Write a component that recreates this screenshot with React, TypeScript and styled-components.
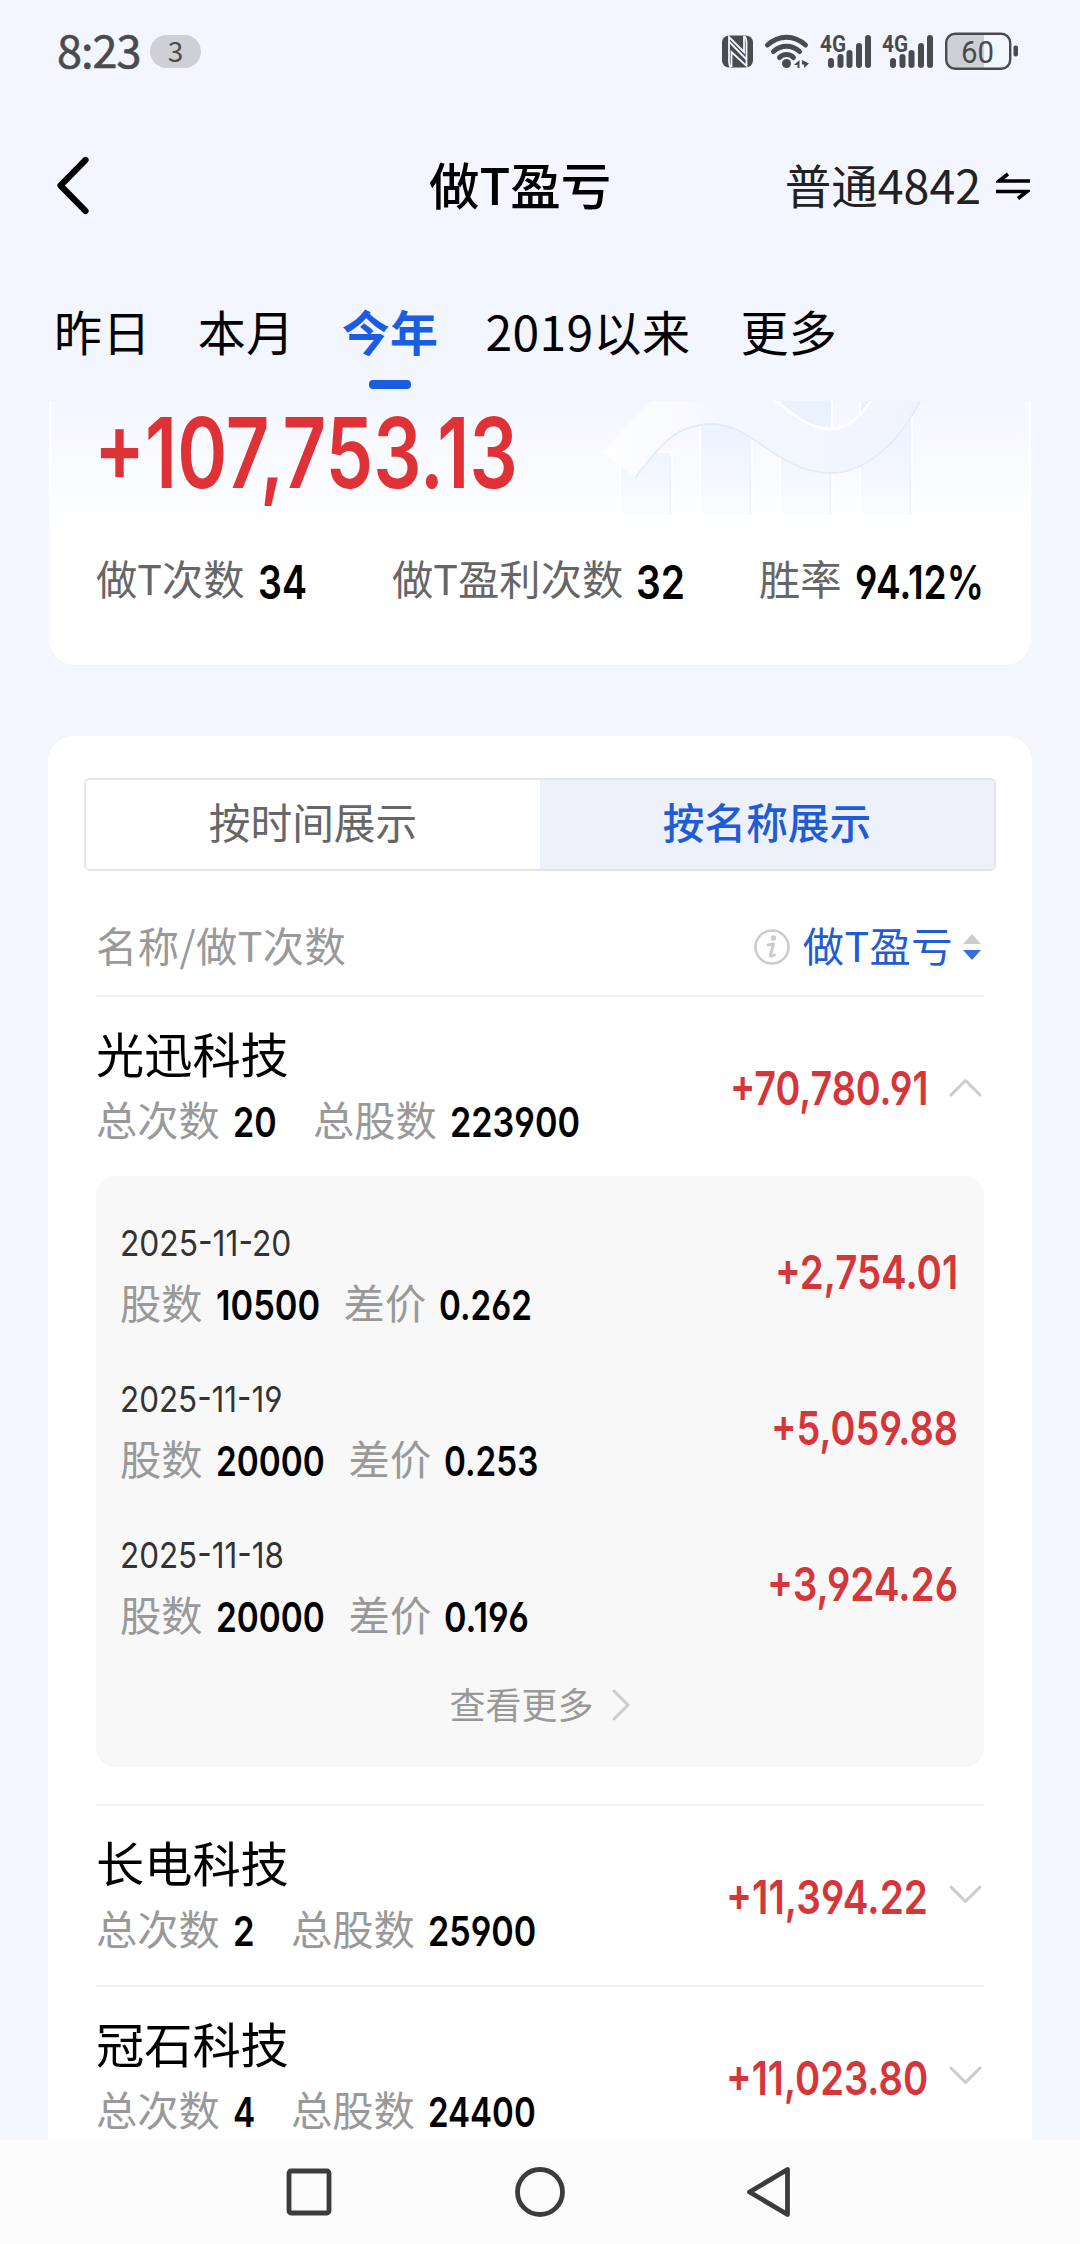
import React, {useLayoutEffect, useRef, useState} from 'react'
import styled, {createGlobalStyle} from 'styled-components'

const GlobalStyle = createGlobalStyle`
  * {
    box-sizing: border-box;
  }

  body {
    margin: 0;
    background: #f3f6ff;
    font-family: "Noto Sans CJK SC", sans-serif;
    color: #000;
  }
`

const Screen = styled.div`
  display: flex;
  flex-direction: column;
  width: 1080px;
  height: 2244px;
  overflow: hidden;
  background: #f3f6ff;
`

/* ---------- numbers ---------- */

const FitBox = styled.span<{$w: number; $size: number; $weight: number; $color: string}>`
  display: inline-block;
  flex: none;
  width: ${({$w}) => $w}px;
  line-height: 1;
  white-space: nowrap;
  font-family: Inter, Roboto, sans-serif;
  font-feature-settings: "cv03", "cv04";
  font-size: ${({$size}) => $size}px;
  font-weight: ${({$weight}) => $weight};
  color: ${({$color}) => $color};
`

const FitInner = styled.span`
  display: inline-block;
  transform-origin: 0 50%;
`

type TNum = {w: number; size?: number; weight?: number; color?: string; children: string}

// condensed figures: the text is squeezed to the width of its box
const Num = ({w, size = 41, weight = 600, color = '#000', children}: TNum) => {
  const ref = useRef<HTMLSpanElement>(null)
  const [scale, setScale] = useState(1)

  useLayoutEffect(() => {
    if (ref.current) setScale(w / ref.current.offsetWidth)
  }, [w, children])

  return (
    <FitBox $w={w} $size={size} $weight={weight} $color={color}>
      <FitInner ref={ref} style={{transform: `scaleX(${scale})`}}>{children}</FitInner>
    </FitBox>
  )
}

// lifts CJK text to the optical middle of its row
const Label = styled.span`
  padding-bottom: 5px;
`

/* ---------- status bar ---------- */

const StatusBar = styled.div`
  display: flex;
  align-items: center;
  flex: none;
  height: 103px;
  padding: 0 62px 0 57px;
`

const Clock = styled.div`
  width: 93px;
  padding-bottom: 6px;
  font-size: 45px;
  line-height: 60px;
  letter-spacing: -1px;
  color: #4a4b4d;
  -webkit-text-stroke: .6px #4a4b4d;
`

const Notice = styled.div`
  width: 51px;
  height: 33px;
  border-radius: 17px;
  background: #cfd0d5;
  text-align: center;
  font-size: 28px;
  line-height: 31px;
  color: #4a4b4d;
`

const StatusIcons = styled.div`
  margin-left: auto;
  height: 48px;
`

const Signal = ({x}: {x: number}) => (
  <g transform={`translate(${x} 0)`}>
    <text x="-1" y="19.500" fontSize="23.500" fontWeight="700" textLength="26" lengthAdjust="spacingAndGlyphs" fontFamily="Roboto">4G</text>
    <rect x="7" y="26" width="6" height="10" rx="3"/>
    <rect x="16.500" y="22" width="6" height="14" rx="3"/>
    <rect x="25.500" y="18" width="6" height="18" rx="3"/>
    <rect x="35" y="11" width="6" height="25" rx="3"/>
    <rect x="44" y="3" width="6" height="33" rx="3"/>
  </g>
)

const StatusGlyphs = () => (
  <svg width="300" height="48" viewBox="0 -4 300 48" fill="#4a4b4d">
    <rect x="4" y="3.500" width="31" height="32" rx="7"/>
    <path d="M12.500 35.500 Q11 33 11 29 V5 L26 20 V4 M26.500 4 Q28.500 6 28.500 10 V34 L13.500 20 V35 M11.500 10 L28 27" fill="none" stroke="#f3f6ff" strokeWidth="1.800"/>
    <g fill="none" stroke="#4a4b4d" strokeWidth="5" strokeLinecap="round">
      <path d="M49.500 13 C61 2.500 76 2.500 87.500 13"/>
      <path d="M55.500 19.500 C63 12.500 74 12.500 81.500 19.500"/>
      <path d="M61.500 25.500 C65.500 21.500 71.500 21.500 75.500 25.500"/>
    </g>
    <circle cx="68.500" cy="31.500" r="4.500"/>
    <path d="M76 33 L81.500 28 V36 H79.500 V33 Z M84 28 L91 31.500 L86 36 V32.500 H84 Z"/>
    <Signal x={103}/>
    <Signal x={165}/>
    <path d="M234 2 H266 V36 H234 Q229 36 229 30 V8 Q229 2 234 2 Z" fill="#cfd0d5"/>
    <rect x="228.200" y="1.700" width="64" height="35" rx="9" fill="none" stroke="#4a4b4d" strokeWidth="2.400"/>
    <rect x="295.500" y="13.500" width="4.500" height="11" rx="2"/>
    <text x="243" y="30.500" fontSize="32" textLength="33" lengthAdjust="spacingAndGlyphs" fontFamily="Roboto">60</text>
  </svg>
)

/* ---------- header ---------- */

const Header = styled.header`
  display: grid;
  grid-template-columns: 374px auto 1fr;
  align-items: center;
  flex: none;
  height: 166px;
  padding: 0 50px 0 55px;
`

const Title = styled.h1`
  margin: 0;
  padding-bottom: 6px;
  font-size: 50.500px;
  line-height: 66px;
  font-weight: 500;
`

const Account = styled.div`
  display: flex;
  justify-content: flex-end;
  align-items: center;
  gap: 15px;
  font-size: 46.500px;
  line-height: 64px;
  color: #222;
`

const Tabs = styled.nav`
  display: flex;
  gap: 47px;
  flex: none;
  height: 132px;
  padding: 26px 54px 0;
`

const Tab = styled.div<{$active?: boolean}>`
  display: flex;
  flex-direction: column;
  align-items: center;
  gap: 14px;
  font-size: 48px;
  line-height: 71px;
  letter-spacing: .4px;
  font-weight: ${({$active}) => $active ? 700 : 400};
  color: ${({$active}) => $active ? '#1a5de0' : '#000'};

  &:last-child {
    margin-left: 3px;
  }

  &::after {
    content: '';
    display: ${({$active}) => $active ? 'block' : 'none'};
    width: 42px;
    height: 9px;
    border-radius: 4px;
    background: #1a5de0;
  }
`

/* ---------- content ---------- */

// runs on underneath the navigation bar
const Content = styled.main`
  flex: 1;
  min-height: 0;
`

const Summary = styled.section`
  margin: 0 49px;
  height: 264px;
  border-radius: 0 0 26px 26px;
  background: #fff;
`

const SummaryTop = styled.div`
  display: flex;
  justify-content: space-between;
  margin: 0 3px;
  height: 140px;
  background: linear-gradient(#f4f7ff, #fff);
`

const Total = styled.div`
  padding: 3px 0 0 42px;
  line-height: 0;
`

const Stats = styled.div`
  display: grid;
  grid-template-columns: 296px 367px auto;
  padding: 6px 0 0 47px;
`

const Pair = styled.div<{$color?: string}>`
  display: flex;
  align-items: center;
  gap: 13px;
  font-size: 41.300px;
  line-height: 60px;
  color: ${({$color}) => $color ?? '#999'};

  ${FitBox} {
    margin-top: 9px;
  }
`

const Panel = styled.section`
  margin: 71px 48px 0;
  padding-top: 42px;
  height: 1500px;
  border-radius: 26px;
  background: #fff;
`

const Segments = styled.div`
  display: grid;
  grid-template-columns: 1fr 1fr;
  margin: 0 36px;
  height: 93px;
  border: 2px solid #e4e5e8;
  border-radius: 6px;
  overflow: hidden;
`

const Segment = styled.div<{$active?: boolean}>`
  text-align: center;
  font-size: 41.700px;
  line-height: 83px;
  font-weight: ${({$active}) => $active ? 500 : 400};
  color: ${({$active}) => $active ? '#1f5cd6' : '#666'};
  background: ${({$active}) => $active ? '#edf1fc' : '#fff'};
`

const ListHead = styled.div`
  display: flex;
  align-items: center;
  margin: 0 48px;
  height: 126px;
  padding: 44px 3px 17px 0;
  border-bottom: 2px solid #f2f2f4;
  font-size: 41.300px;
  line-height: 58px;
  letter-spacing: .4px;
  color: #999;
`

const SortBy = styled.div`
  display: flex;
  align-items: center;
  gap: 10px;
  margin-left: auto;
  color: #1f5cd6;

  svg:first-child {
    margin-right: 3px;
  }
`

const Stock = styled.article<{$line?: boolean}>`
  margin: 0 48px;
  border-top: ${({$line}) => $line ? '2px solid #f2f2f4' : '0'};
`

const StockRow = styled.div`
  display: flex;
  justify-content: space-between;
  align-items: center;
  height: 179px;
  padding: 2px 2px 0 0;
`

const StockInfo = styled.div`
  margin-bottom: 9px;
`

const Name = styled.h2`
  margin: 0 0 3px;
  font-size: 48.200px;
  line-height: 66px;
  font-weight: 400;
`

const Line = styled.div<{$gap: number}>`
  display: flex;
  gap: ${({$gap}) => $gap}px;
`

const Amount = styled.div`
  display: flex;
  align-items: center;
  gap: 20px;
`

const Trades = styled.div`
  height: 591px;
  margin-bottom: 37px;
  padding: 40px 26px 0 24px;
  border-radius: 20px;
  background: #f8f8f8;
`

const Trade = styled.div`
  display: flex;
  justify-content: space-between;
  align-items: center;
  height: 156px;
  padding-bottom: 46px;
`

const TradeInfo = styled.div`
  margin-top: 7px;
`

const TradeDate = styled.div`
  height: 52px;
  padding-top: 6px;
  line-height: 0;
`

const More = styled.div`
  display: flex;
  justify-content: center;
  align-items: center;
  gap: 17px;
  height: 42px;
  padding-left: 2px;
  font-size: 36px;
  color: #999;
`

const NavBar = styled.footer`
  position: relative;
  z-index: 1;
  display: flex;
  justify-content: center;
  flex: none;
  height: 104px;
  background: #fcfcfc;
`

const RED = '#d5363a'

const stocks = [
  {
    name: '光迅科技', times: '20', timesW: 44, shares: '223900', sharesW: 130, amount: '+70,780.91', amountW: 198, open: true,
    trades: [
      {date: '2025-11-20', dateW: 171, shares: '10500', sharesW: 104, diff: '0.262', diffW: 93, amount: '+2,754.01', amountW: 183},
      {date: '2025-11-19', dateW: 163, shares: '20000', sharesW: 109, diff: '0.253', diffW: 94, amount: '+5,059.88', amountW: 187},
      {date: '2025-11-18', dateW: 164, shares: '20000', sharesW: 109, diff: '0.196', diffW: 85, amount: '+3,924.26', amountW: 191},
    ],
  },
  {name: '长电科技', times: '2', timesW: 22, shares: '25900', sharesW: 108, amount: '+11,394.22', amountW: 202, open: false, trades: []},
  {name: '冠石科技', times: '4', timesW: 22, shares: '24400', sharesW: 108, amount: '+11,023.80', amountW: 202, open: false, trades: []},
]

const Chevron = ({open}: {open: boolean}) => (
  <svg width="34" height="36" viewBox="0 0 34 36" fill="none" stroke="#ccc" strokeWidth="3" strokeLinecap="round" strokeLinejoin="round">
    <path d={open ? 'M3 25 L17.500 10.500 L32 25' : 'M3 8 L17.500 22.500 L32 8'}/>
  </svg>
)

const Artwork = () => (
  <svg width="440" height="120" viewBox="0 0 440 120">
    <defs>
      <linearGradient id="bar" gradientUnits="userSpaceOnUse" x1="0" y1="10" x2="0" y2="115">
        <stop offset="0" stopColor="#ebf2ff"/>
        <stop offset=".5" stopColor="#f1f6ff"/>
        <stop offset="1" stopColor="#fcfdff"/>
      </linearGradient>
      <linearGradient id="ribbon" x1="0" y1="0" x2="1" y2="0">
        <stop offset="0" stopColor="#fefeff"/>
        <stop offset=".4" stopColor="#f3f7ff"/>
        <stop offset="1" stopColor="#eff4ff"/>
      </linearGradient>
    </defs>
    <g fill="url(#bar)" stroke="#fff" strokeWidth="2">
      <rect x="32" y="51" width="52" height="64" rx="3"/>
      <rect x="112" y="-10" width="52" height="125"/>
      <rect x="192" y="-10" width="52" height="125"/>
      <rect x="272" y="-10" width="52" height="125"/>
    </g>
    <path d="M82.500 54 V114 M162.500 40 V114 M242.500 72 V114 M322.500 20 V114" stroke="#ecf2fe" strokeWidth="1.500"/>
    <path d="M15 52 Q40 20 66 -2 L184 -2 C205 12 220 28 242 28 C262 28 275 12 284 -2 L333 -2 C310 45 275 72 243 72 C190 72 165 23 124 23 C85 23 68 50 47 77 Z" fill="url(#ribbon)"/>
    <path d="M47 77 C68 50 85 23 124 23 C165 23 190 72 243 72 C275 72 310 45 333 -2" fill="none" stroke="#e3ebfb" strokeWidth="1.800"/>
    <path d="M184 -2 C205 12 220 28 242 28 C262 28 275 12 284 -2" fill="none" stroke="#fff" strokeWidth="2.500"/>
  </svg>
)

const App = () => (
  <>
    <GlobalStyle/>
    <Screen>
      <StatusBar>
        <Clock>8:23</Clock>
        <Notice>3</Notice>
        <StatusIcons><StatusGlyphs/></StatusIcons>
      </StatusBar>

      <Header>
        <svg width="36" height="60" viewBox="0 0 36 60" fill="none" stroke="#000" strokeWidth="6.200" strokeLinecap="round" strokeLinejoin="round">
          <path d="M30.500 4 L5.500 29.500 L30.500 55"/>
        </svg>
        <Title>做T盈亏</Title>
        <Account>
          <Label>普通4842</Label>
          <svg width="34" height="28" viewBox="0 0 34 28" fill="none" stroke="#000" strokeWidth="3.500">
            <path d="M34 9 H3 L12 2 M0 19.500 H31 L22 26.500"/>
          </svg>
        </Account>
      </Header>

      <Tabs>
        <Tab>昨日</Tab>
        <Tab>本月</Tab>
        <Tab $active>今年</Tab>
        <Tab>2019以来</Tab>
        <Tab>更多</Tab>
      </Tabs>

      <Content>
        <Summary>
          <SummaryTop>
            <Total><Num w={424} size={97} color="#df3236">+107,753.13</Num></Total>
            <Artwork/>
          </SummaryTop>
          <Stats>
            <Pair $color="#666">做T次数 <Num w={49} size={46}>34</Num></Pair>
            <Pair $color="#666">做T盈利次数 <Num w={49} size={46}>32</Num></Pair>
            <Pair $color="#666">胜率 <Num w={129} size={46}>94.12%</Num></Pair>
          </Stats>
        </Summary>

        <Panel>
          <Segments>
            <Segment>按时间展示</Segment>
            <Segment $active>按名称展示</Segment>
          </Segments>
          <ListHead>
            <Label>名称/做T次数</Label>
            <SortBy>
              <svg width="36" height="36" viewBox="0 0 36 36" fill="none" stroke="#ccc" strokeLinecap="round" strokeLinejoin="round">
                <circle cx="18" cy="18" r="16.500" strokeWidth="2.500"/>
                <circle cx="19.500" cy="9" r="2.700" fill="#ccc" stroke="none"/>
                <path d="M14 16 L19.500 15 L16.500 26 Q16 28.500 20.500 26" strokeWidth="3"/>
              </svg>
              <Label>做T盈亏</Label>
              <svg width="18" height="26" viewBox="0 0 18 26">
                <path d="M9 0 L18 10 H0 Z" fill="#ccc"/>
                <path d="M9 26 L18 16 H0 Z" fill="#3a6fe0"/>
              </svg>
            </SortBy>
          </ListHead>

          {stocks.map((stock, i) => (
            <Stock key={stock.name} $line={i > 0}>
              <StockRow>
                <StockInfo>
                  <Name>{stock.name}</Name>
                  <Line $gap={36}>
                    <Pair>总次数 <Num w={stock.timesW}>{stock.times}</Num></Pair>
                    <Pair>总股数 <Num w={stock.sharesW}>{stock.shares}</Num></Pair>
                  </Line>
                </StockInfo>
                <Amount>
                  <Num w={stock.amountW} size={47} weight={600} color={RED}>{stock.amount}</Num>
                  <Chevron open={stock.open}/>
                </Amount>
              </StockRow>
              {stock.open && (
                <Trades>
                  {stock.trades.map(trade => (
                    <Trade key={trade.date}>
                      <TradeInfo>
                        <TradeDate><Num w={trade.dateW} size={36} weight={400} color="#333">{trade.date}</Num></TradeDate>
                        <Line $gap={24}>
                          <Pair>股数 <Num w={trade.sharesW}>{trade.shares}</Num></Pair>
                          <Pair>差价 <Num w={trade.diffW}>{trade.diff}</Num></Pair>
                        </Line>
                      </TradeInfo>
                      <Num w={trade.amountW} size={47} weight={600} color={RED}>{trade.amount}</Num>
                    </Trade>
                  ))}
                  <More>
                    <Label>查看更多</Label>
                    <svg width="20" height="32" viewBox="0 0 20 32" fill="none" stroke="#ccc" strokeWidth="3" strokeLinecap="round" strokeLinejoin="round">
                      <path d="M3 2 L17 16 L3 30"/>
                    </svg>
                  </More>
                </Trades>
              )}
            </Stock>
          ))}
        </Panel>
      </Content>

      <NavBar>
        <svg width="520" height="104" viewBox="0 0 520 104" fill="none" stroke="#3c3c3c" strokeWidth="4.800" strokeLinejoin="round">
          <rect x="9" y="31" width="40" height="42" rx="2"/>
          <circle cx="260" cy="52" r="22.500"/>
          <path d="M507.500 29.500 V74.500 L469.500 52 Z"/>
        </svg>
      </NavBar>
    </Screen>
  </>
)

export default App
